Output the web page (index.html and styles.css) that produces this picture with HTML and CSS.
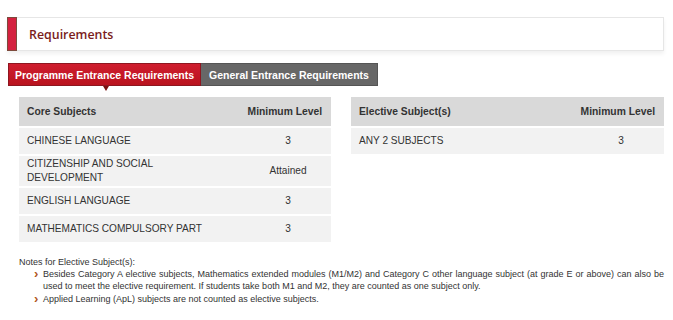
FILE: index.html
```html
<!DOCTYPE html>
<html>
<head>
<meta charset="utf-8">
<link rel="stylesheet" href="styles.css">
</head>
<body>
<div class="page">
  <div class="title-box">
    <span class="title-bar"></span>
    <h2 class="title">Requirements</h2>
  </div>
  <div class="tabs">
    <div class="tab tab-active">Programme Entrance Requirements</div>
    <div class="tab tab-inactive">General Entrance Requirements</div>
  </div>
  <div class="tables">
    <table class="req">
      <thead>
        <tr><th class="c1">Core Subjects</th><th class="c2">Minimum Level</th></tr>
      </thead>
      <tbody>
        <tr><td class="c1">CHINESE LANGUAGE</td><td class="c2">3</td></tr>
        <tr class="tall"><td class="c1">CITIZENSHIP AND SOCIAL<br>DEVELOPMENT</td><td class="c2">Attained</td></tr>
        <tr><td class="c1">ENGLISH LANGUAGE</td><td class="c2">3</td></tr>
        <tr><td class="c1">MATHEMATICS COMPULSORY PART</td><td class="c2">3</td></tr>
      </tbody>
    </table>
    <table class="req">
      <thead>
        <tr><th class="c1">Elective Subject(s)</th><th class="c2">Minimum Level</th></tr>
      </thead>
      <tbody>
        <tr><td class="c1">ANY 2 SUBJECTS</td><td class="c2">3</td></tr>
      </tbody>
    </table>
  </div>
  <div class="notes">
    <p class="notes-title">Notes for Elective Subject(s):</p>
    <ul class="notes-list">
      <li>Besides Category A elective subjects, Mathematics extended modules (M1/M2) and Category C other language subject (at grade E or above) can also be used to meet the elective requirement. If students take both M1 and M2, they are counted as one subject only.</li>
      <li>Applied Learning (ApL) subjects are not counted as elective subjects.</li>
    </ul>
  </div>
</div>
</body>
</html>
```

FILE: styles.css
```css
html, body {
  margin: 0;
  padding: 0;
  background: #ffffff;
}
body {
  font-family: "Liberation Sans", Arial, sans-serif;
  color: #333333;
}
.page {
  padding: 17px 9px 0 7px;
}
.title-box {
  display: flex;
  align-items: center;
  height: 32px;
  border: 1px solid #e6e6e6;
  border-left: none;
  box-shadow: 0 3px 4px rgba(0, 0, 0, 0.06);
  background: #fff;
}
.title-bar {
  align-self: stretch;
  width: 8px;
  margin: -1px 0;
  background: #d4213f;
  border: 1px solid #7d4a3c;
}
.title {
  margin: 0 0 0 12px;
  font-family: "Open Sans", "Liberation Sans", sans-serif;
  font-weight: 600;
  font-size: 12.4px;
  color: #7a1c1c;
}
.tabs {
  display: flex;
  margin: 12px 0 0 1px;
  height: 23px;
}
.tab {
  display: flex;
  align-items: center;
  justify-content: center;
  box-sizing: border-box;
  white-space: nowrap;
  font-size: 10.5px;
  font-weight: bold;
  color: #fff;
  position: relative;
}
.tab-active {
  width: 193px;
  background: linear-gradient(#cf1d2e, #b9131f);
  border: 1px solid #8e1620;
}
.tab-active::after {
  content: "";
  position: absolute;
  left: 94px;
  bottom: -6px;
  border-left: 3px solid transparent;
  border-right: 3px solid transparent;
  border-top: 5px solid #7a1010;
}
.tab-inactive {
  width: 177px;
  background: #676767;
  border: 1px solid #555;
  border-left: none;
}
.tables {
  display: flex;
  align-items: flex-start;
  gap: 20px;
  margin: 11px 0 0 12px;
}
.req {
  border-collapse: collapse;
  font-size: 10.1px;
  color: #333;
}
.req:first-child { width: 312px; }
.req:last-child { width: 313px; }
.req th {
  background: #d9d9d9;
  height: 29px;
  font-weight: bold;
  padding: 0 8px;
  text-align: left;
  font-size: 10.3px;
}
.req th.c2 {
  text-align: right;
  padding-right: 9px;
}
.req td {
  background: #f2f2f2;
  height: 26px;
  padding: 0 8px;
  border-top: 2px solid #fff;
  line-height: 14px;
}
.req tr.tall td { height: 30px; }
.req td.c2 {
  text-align: center;
  width: 70px;
  padding-left: 24px;
}
.notes {
  margin: 14px 0 0 12px;
  font-size: 9px;
  color: #333;
  line-height: 12.5px;
}
.notes-title {
  margin: 0 0 -1px;
}
.notes-list {
  list-style: none;
  margin: 0;
  padding: 0 0 0 24px;
}
.notes-list li {
  position: relative;
  text-align: justify;
}
.notes-list li::before {
  content: "\203A";
  position: absolute;
  left: -9px;
  top: 0;
  font-size: 13px;
  line-height: 11px;
  font-weight: bold;
  color: #b0551c;
}
```
